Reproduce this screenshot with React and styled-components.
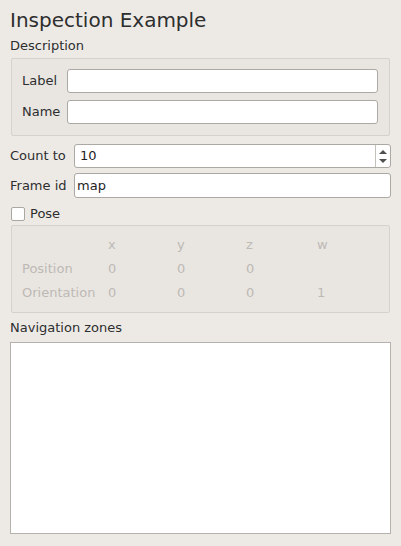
import React from 'react';
import styled, { createGlobalStyle } from 'styled-components';

const GlobalStyle = createGlobalStyle`
  html, body {
    margin: 0;
    padding: 0;
    background: #edeae6;
  }
  body {
    font-family: "DejaVu Sans", "Noto Sans", sans-serif;
    font-size: 13px;
    color: #2e2e2e;
  }
`;

const Page = styled.div`
  box-sizing: border-box;
  width: 401px;
  height: 546px;
  padding: 8px 10px 12px;
  display: flex;
  flex-direction: column;
`;

const Title = styled.h1`
  margin: 0;
  font-size: 20px;
  font-weight: normal;
  line-height: 24px;
  height: 24px;
`;

const SectionLabel = styled.div`
  line-height: 16px;
  height: 16px;
  margin-top: ${({ $top }) => $top}px;
`;

const GroupBox = styled.div`
  box-sizing: border-box;
  margin: ${({ $top }) => $top}px 1px 0;
  border: 1px solid #d5d1cc;
  border-radius: 2px;
  background: #e9e6e2;
`;

const FormGrid = styled.div`
  display: grid;
  grid-template-columns: ${({ $labelWidth }) => $labelWidth}px 1fr;
  row-gap: ${({ $gap }) => $gap}px;
  align-items: center;
  padding: ${({ $pad }) => $pad};
  margin-top: ${({ $top }) => $top || 0}px;
`;

const FieldLabel = styled.label`
  line-height: 16px;
`;

const InputBox = styled.div`
  box-sizing: border-box;
  height: ${({ $h }) => $h}px;
  border: 1px solid #aca8a3;
  border-radius: 3px;
  background: #fff;
  display: flex;
  align-items: stretch;
`;

const InputText = styled.div`
  flex: 1;
  padding-left: ${({ $pl }) => $pl}px;
  line-height: ${({ $h }) => $h}px;
  color: #1e1e1e;
`;

const SpinButtons = styled.div`
  width: 14px;
  border-left: 1px solid #c4c0bb;
  display: flex;
  flex-direction: column;
  align-items: center;
  justify-content: center;
  gap: 5px;
`;

const CheckRow = styled.div`
  display: flex;
  align-items: center;
  gap: 5px;
  margin: 8px 0 0 1px;
  height: 15px;
`;

const CheckBox = styled.div`
  box-sizing: border-box;
  width: 14px;
  height: 14px;
  border: 1px solid #aaa6a1;
  border-radius: 2px;
  background: #fff;
`;

const PoseGrid = styled.div`
  display: grid;
  grid-template-columns: 86px 69px 69px 71px 1fr;
  grid-auto-rows: 24px;
  padding: 7px 10px 7px 10px;
  color: #bdb9b4;
  line-height: 24px;
`;

const ListBox = styled.div`
  flex: 1;
  margin-top: 6px;
  border: 1px solid #b5b1ac;
  background: #fff;
`;

const Arrow = ({ up }) => (
  <svg width="8" height="4" viewBox="0 0 8 4">
    <polygon points={up ? '0,4 4,0 8,4' : '0,0 4,4 8,0'} fill="#4f4f4f" />
  </svg>
);

const poseRows = [
  ['', 'x', 'y', 'z', 'w'],
  ['Position', '0', '0', '0', ''],
  ['Orientation', '0', '0', '0', '1'],
];

export default function App() {
  return (
    <>
      <GlobalStyle />
      <Page>
        <Title>Inspection Example</Title>
        <SectionLabel $top={6}>Description</SectionLabel>
        <GroupBox $top={4}>
          <FormGrid $labelWidth={45} $gap={7} $pad="10px 11px 11px 10px">
            <FieldLabel>Label</FieldLabel>
            <InputBox $h={24} />
            <FieldLabel>Name</FieldLabel>
            <InputBox $h={24} />
          </FormGrid>
        </GroupBox>
        <FormGrid $labelWidth={64} $gap={5} $pad="0" $top={8}>
          <FieldLabel>Count to</FieldLabel>
          <InputBox $h={24}>
            <InputText $pl={5} $h={22}>10</InputText>
            <SpinButtons>
              <Arrow up />
              <Arrow />
            </SpinButtons>
          </InputBox>
          <FieldLabel>Frame id</FieldLabel>
          <InputBox $h={25}>
            <InputText $pl={2} $h={23}>map</InputText>
          </InputBox>
        </FormGrid>
        <CheckRow>
          <CheckBox />
          <span>Pose</span>
        </CheckRow>
        <GroupBox $top={4}>
          <PoseGrid>
            {poseRows.flatMap((row, r) =>
              row.map((cell, c) => <div key={`${r}-${c}`}>{cell}</div>)
            )}
          </PoseGrid>
        </GroupBox>
        <SectionLabel $top={7}>Navigation zones</SectionLabel>
        <ListBox />
      </Page>
    </>
  );
}
